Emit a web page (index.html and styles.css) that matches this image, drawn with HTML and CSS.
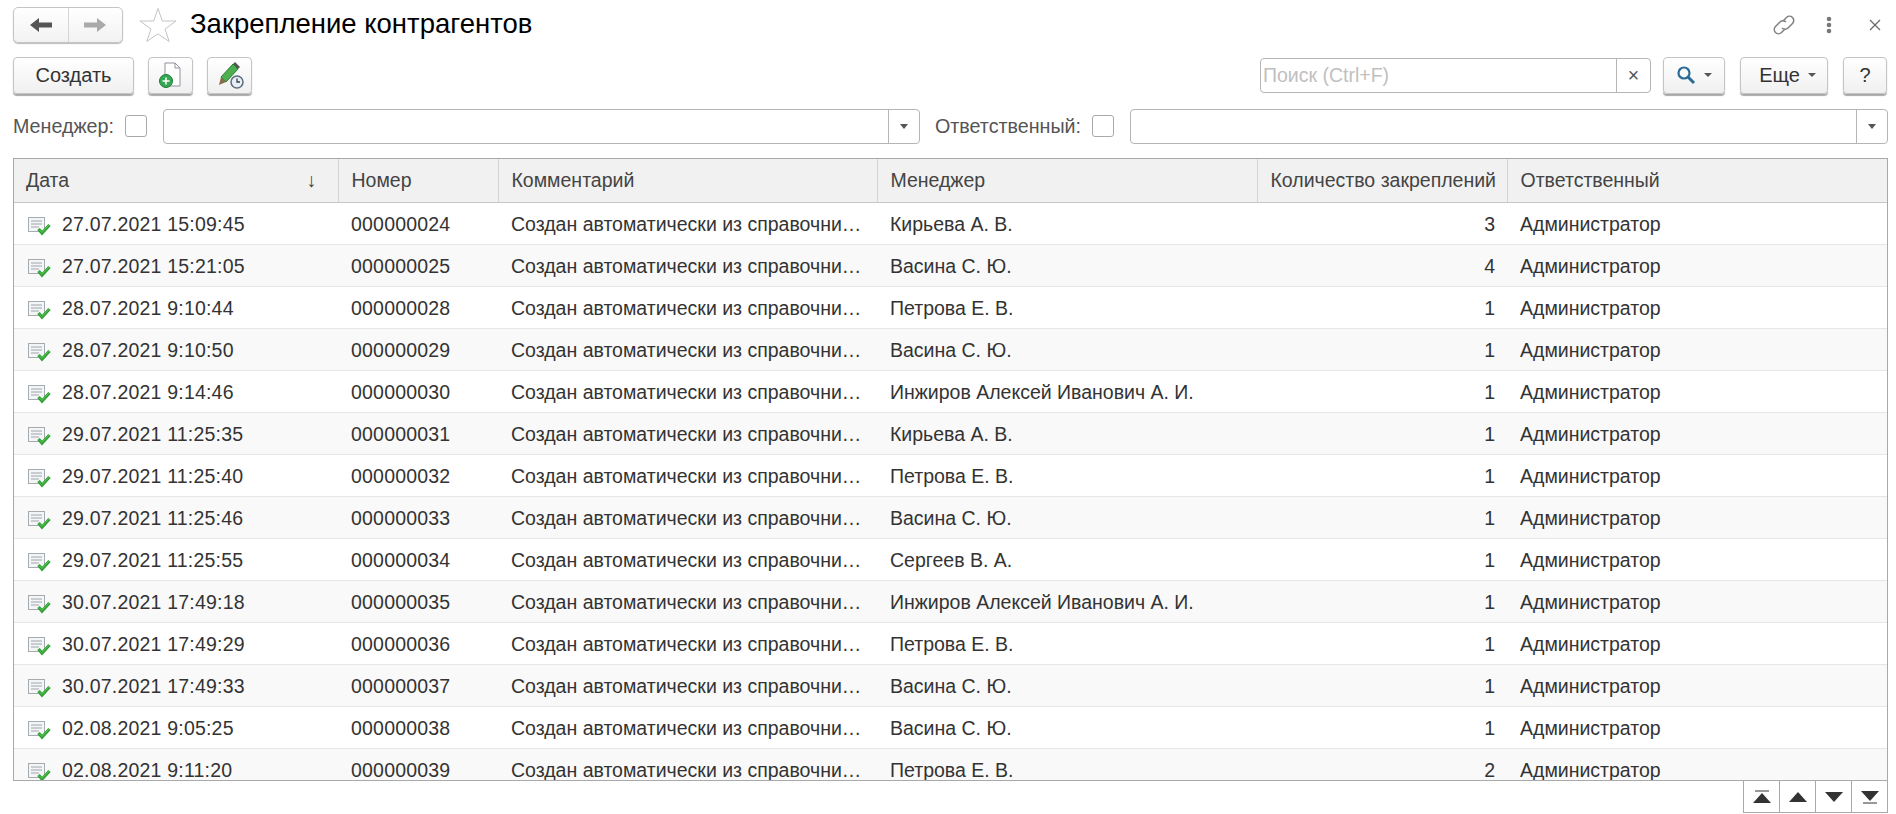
FILE: index.html
```html
<!DOCTYPE html>
<html lang="ru">
<head>
  <meta charset="UTF-8">
  <title>Закрепление контрагентов</title>
  <link rel="stylesheet" href="styles.css">
</head>
<body>
  <svg class="defs" width="0" height="0">
    <symbol id="doc" viewBox="0 0 24 20">
      <rect x="0.5" y="0.5" width="16" height="14" fill="#f3f5f7" stroke="#a6abb0"/>
      <path d="M3 4h11M3 7h11M3 10h8" stroke="#a0a6ac" fill="none"/>
      <path d="M10.500 12l3.500 4 7.500-8" fill="none" stroke="#2f9e35" stroke-width="3.200"/>
      <path d="M11 12.500l3 3 7-7.500" fill="none" stroke="#5ccb52" stroke-width="1"/>
    </symbol>
  </svg>

  <div class="titlebar">
    <div class="nav">
      <button class="nav-btn">
        <svg width="22" height="16" viewBox="0 0 22 16"><path d="M0 8l9-7v4.500h13v5H9V15z" fill="#555"/></svg>
      </button>
      <button class="nav-btn">
        <svg width="22" height="16" viewBox="0 0 22 16"><path d="M22 8l-9-7v4.500H0v5h13V15z" fill="#aaa"/></svg>
      </button>
    </div>
    <svg class="star" width="38" height="36" viewBox="0 0 38 36"><path d="M19 1.500l4.300 12.500H37l-11 8 4.200 12.500L19 26.800 7.800 34.500 12 22 1 14h13.700z" fill="#fff" stroke="#c4c4c4"/></svg>
    <h1>Закрепление контрагентов</h1>
    <div class="win-icons">
      <svg class="ic-link" width="24" height="24" viewBox="0 0 24 24" fill="none" stroke="#808080" stroke-width="1.500"><path d="M11 8l3.500-3.500a4.200 4.200 0 0 1 6 6L16 15a4.200 4.200 0 0 1-6 0"/><path d="M13 16l-3.500 3.500a4.200 4.200 0 0 1-6-6L8 9a4.200 4.200 0 0 1 6 0"/></svg>
      <svg class="ic-dots" width="6" height="18" viewBox="0 0 6 18" fill="#777"><circle cx="3" cy="3" r="2.300"/><circle cx="3" cy="9" r="2.300"/><circle cx="3" cy="15" r="2.300"/></svg>
      <svg class="ic-close" width="12" height="12" viewBox="0 0 12 12" stroke="#666" stroke-width="1.200"><path d="M1 1l10 10M11 1L1 11"/></svg>
    </div>
  </div>

  <div class="toolbar">
    <button class="btn btn-create">Создать</button>
    <button class="btn btn-icon">
      <svg width="28" height="28" viewBox="0 0 28 28">
        <path d="M8 2h10l5 5v18H8z" fill="#fff" stroke="#8d949b"/>
        <path d="M18 2v5h5" fill="none" stroke="#8d949b"/>
        <circle cx="9" cy="20" r="6.500" fill="#34a853" stroke="#1f7a36"/>
        <path d="M9 16.500v7M5.500 20h7" stroke="#fff" stroke-width="1.500"/>
      </svg>
    </button>
    <button class="btn btn-icon">
      <svg width="30" height="28" viewBox="0 0 30 28">
        <path d="M6 16L18 3l5 5-12 13z" fill="#4caf50" stroke="#2e7d32"/>
        <path d="M18 3l2-2 5 5-2 2z" fill="#555"/>
        <path d="M6 16l5 5-7 3z" fill="#8a6d4b"/>
        <circle cx="22" cy="21" r="6" fill="#e8eef5" stroke="#5d6b7a" stroke-width="1.500"/>
        <path d="M22 17.500V21h3" fill="none" stroke="#38424d" stroke-width="1.300"/>
      </svg>
    </button>
    <div class="search">
      <span class="search-text">Поиск (Ctrl+F)</span>
      <span class="search-clear">×</span>
    </div>
    <button class="btn btn-find">
      <svg width="20" height="20" viewBox="0 0 20 20" fill="none"><circle cx="8" cy="8" r="5.500" stroke="#2a6a96" stroke-width="2.200"/><path d="M12 12l6 6" stroke="#2a6a96" stroke-width="3"/></svg>
      <span class="caret"></span>
    </button>
    <button class="btn btn-more">Еще <span class="caret"></span></button>
    <button class="btn btn-help">?</button>
  </div>

  <div class="filters">
    <label class="filter-label">Менеджер:</label>
    <span class="check"></span>
    <div class="combo combo-manager"><span class="combo-arrow"><i></i></span></div>
    <label class="filter-label">Ответственный:</label>
    <span class="check"></span>
    <div class="combo combo-owner"><span class="combo-arrow"><i></i></span></div>
  </div>

  <div class="grid-wrap">
    <table class="grid">
      <colgroup>
        <col class="c-date"><col class="c-num"><col class="c-comment"><col class="c-manager"><col class="c-count"><col>
      </colgroup>
      <thead>
        <tr>
          <th><div class="th-date"><span>Дата</span><span class="sort">↓</span></div></th>
          <th>Номер</th>
          <th>Комментарий</th>
          <th>Менеджер</th>
          <th>Количество закреплений</th>
          <th>Ответственный</th>
        </tr>
      </thead>
      <tbody id="rows"></tbody>
    </table>
  </div>

  <div class="pager-row">
    <div class="pager">
      <span class="pg"><svg width="18" height="14" viewBox="0 0 18 14" fill="#333"><path d="M2 0h14v2H2z" fill="#999"/><path d="M9 3l9 10H0z"/></svg></span>
      <span class="pg"><svg width="18" height="10" viewBox="0 0 18 10" fill="#333"><path d="M9 0l9 10H0z"/></svg></span>
      <span class="pg"><svg width="18" height="10" viewBox="0 0 18 10" fill="#333"><path d="M9 10l9-10H0z"/></svg></span>
      <span class="pg"><svg width="18" height="14" viewBox="0 0 18 14" fill="#333"><path d="M9 11L18 1H0z"/><path d="M2 12h14v2H2z" fill="#999"/></svg></span>
    </div>
  </div>

  <script>
    const data = [
      ['27.07.2021 15:09:45', '000000024', 'Кирьева А. В.', 3],
      ['27.07.2021 15:21:05', '000000025', 'Васина С. Ю.', 4],
      ['28.07.2021 9:10:44', '000000028', 'Петрова Е. В.', 1],
      ['28.07.2021 9:10:50', '000000029', 'Васина С. Ю.', 1],
      ['28.07.2021 9:14:46', '000000030', 'Инжиров Алексей Иванович А. И.', 1],
      ['29.07.2021 11:25:35', '000000031', 'Кирьева А. В.', 1],
      ['29.07.2021 11:25:40', '000000032', 'Петрова Е. В.', 1],
      ['29.07.2021 11:25:46', '000000033', 'Васина С. Ю.', 1],
      ['29.07.2021 11:25:55', '000000034', 'Сергеев В. А.', 1],
      ['30.07.2021 17:49:18', '000000035', 'Инжиров Алексей Иванович А. И.', 1],
      ['30.07.2021 17:49:29', '000000036', 'Петрова Е. В.', 1],
      ['30.07.2021 17:49:33', '000000037', 'Васина С. Ю.', 1],
      ['02.08.2021 9:05:25', '000000038', 'Васина С. Ю.', 1],
      ['02.08.2021 9:11:20', '000000039', 'Петрова Е. В.', 2]
    ];

    const tbody = document.getElementById('rows');
    data.forEach(row => {
      const tr = document.createElement('tr');
      tr.innerHTML = `
        <td class="digits"><div class="cell-date"><svg class="row-icon"><use href="#doc"/></svg>${row[0]}</div></td>
        <td class="digits">${row[1]}</td>
        <td>Создан автоматически из справочни…</td>
        <td>${row[2]}</td>
        <td class="num">${row[3]}</td>
        <td>Администратор</td>`;
      tbody.appendChild(tr);
    });
  </script>
</body>
</html>
```

FILE: styles.css
```css
html, body {
  margin: 0;
  padding: 0;
  height: 100%;
  overflow: hidden;
}
body {
  font-family: "Liberation Sans", Arial, sans-serif;
  font-size: 19.5px;
  color: #333;
  background: #fff;
}
.defs {
  position: absolute;
}
button {
  font-family: inherit;
}

/* title */
.titlebar {
  display: flex;
  align-items: center;
  height: 50px;
  padding: 0 13px;
}
.nav {
  display: flex;
  width: 110px;
  height: 36px;
  border: 1px solid #c4c4c4;
  border-radius: 5px;
  box-shadow: 0 1px 1px #bbb;
  background: linear-gradient(#fff, #f2f2f2);
  box-sizing: border-box;
}
.nav-btn {
  flex: 1;
  border: none;
  background: none;
  padding: 0;
  display: flex;
  align-items: center;
  justify-content: center;
}
.nav-btn + .nav-btn {
  border-left: 1px solid #d5d5d5;
}
.star {
  margin-left: 16px;
}
h1 {
  font-size: 27.5px;
  font-weight: normal;
  color: #000;
  margin: 0 0 2px 13px;
}
.win-icons {
  margin-left: auto;
  display: flex;
  align-items: center;
  padding-right: 2px;
}
.ic-dots {
  margin-left: 30px;
}
.ic-close {
  margin-left: 37px;
}

/* toolbar */
.toolbar {
  display: flex;
  align-items: center;
  height: 38px;
  padding: 0 9px 0 13px;
  margin-top: 6px;
}
.btn {
  height: 37px;
  box-sizing: border-box;
  border: 1px solid #c4c4c4;
  border-radius: 4px;
  background: linear-gradient(#fff, #f0f0f0);
  box-shadow: 0 2px 1px #a8a8a8;
  color: #333;
  font-size: 20px;
  display: flex;
  align-items: center;
  justify-content: center;
  padding: 0;
}
.btn-create {
  width: 121px;
}
.btn-icon {
  width: 45px;
  margin-left: 14px;
}
.search {
  margin-left: auto;
  width: 391px;
  height: 35px;
  box-sizing: border-box;
  border: 1px solid #b5b5b5;
  border-radius: 4px;
  display: flex;
  align-items: center;
}
.search-text {
  flex: 1;
  padding-left: 2px;
  color: #c0c0c0;
}
.search-clear {
  width: 33px;
  height: 100%;
  border-left: 1px solid #b5b5b5;
  display: flex;
  align-items: center;
  justify-content: center;
  color: #555;
}
.btn-find {
  width: 62px;
  margin-left: 12px;
  gap: 8px;
}
.btn-more {
  width: 88px;
  margin-left: 15px;
  gap: 8px;
  padding-left: 7px;
}
.btn-help {
  width: 44px;
  margin-left: 15px;
}
.caret {
  width: 0;
  height: 0;
  border-left: 4px solid transparent;
  border-right: 4px solid transparent;
  border-top: 4px solid #555;
}

/* filters */
.filters {
  display: flex;
  align-items: center;
  height: 36px;
  padding: 0 8px 0 13px;
  margin-top: 14px;
  margin-bottom: 14px;
  color: #555;
  font-size: 19.7px;
}
.check {
  width: 22px;
  height: 22px;
  box-sizing: border-box;
  border: 1px solid #aaa;
  border-radius: 3px;
  margin-left: 11px;
  flex: none;
}
.combo {
  height: 35px;
  box-sizing: border-box;
  border: 1px solid #b5b5b5;
  border-radius: 4px;
  margin-left: 16px;
  display: flex;
  justify-content: flex-end;
}
.combo-manager {
  width: 757px;
  margin-right: 15px;
}
.combo-owner {
  flex: 1;
  margin-left: 16px;
}
.combo-arrow {
  width: 30px;
  border-left: 1px solid #b5b5b5;
  display: flex;
  align-items: center;
  justify-content: center;
}
.combo-arrow i {
  width: 0;
  height: 0;
  border-left: 4px solid transparent;
  border-right: 4px solid transparent;
  border-top: 5px solid #555;
}

/* grid */
.grid-wrap {
  height: 623px;
  margin: 0 8px 0 13px;
  box-sizing: border-box;
  border: 1px solid #a9a9a9;
  overflow: hidden;
}
.grid {
  width: 100%;
  table-layout: fixed;
  border-collapse: collapse;
}
.c-date { width: 324px; }
.c-num { width: 160px; }
.c-comment { width: 379px; }
.c-manager { width: 380px; }
.c-count { width: 250px; }
.grid th {
  height: 43px;
  padding: 1px 12px 0 13px;
  box-sizing: border-box;
  background: #f1f1f1;
  border-bottom: 1px solid #c8c8c8;
  border-right: 1px solid #d4d4d4;
  font-weight: normal;
  color: #444;
  text-align: left;
  white-space: nowrap;
  overflow: hidden;
}
.grid th:first-child {
  padding-left: 12px;
}
.grid th:last-child {
  border-right: none;
}
.th-date {
  display: flex;
  justify-content: space-between;
  padding-right: 9px;
}
.grid td {
  height: 42px;
  padding: 2px 12px 0 13px;
  box-sizing: border-box;
  border-bottom: 1px solid #e6e6e6;
  white-space: nowrap;
  overflow: hidden;
}
.grid td:first-child {
  padding-left: 12px;
}
.grid td.digits {
  letter-spacing: 0.2px;
}
.grid tbody tr:nth-child(even) {
  background: #f9f9f9;
}
.grid td.num {
  text-align: right;
}
.cell-date {
  display: flex;
  align-items: center;
  gap: 10px;
}
.row-icon {
  width: 24px;
  height: 20px;
  margin-left: 2px;
  margin-top: 6px;
  flex: none;
}

/* pager */
.pager-row {
  display: flex;
  justify-content: flex-end;
  padding-right: 8px;
}
.pager {
  display: flex;
  border: 1px solid #a9a9a9;
  border-top: none;
  height: 31px;
}
.pg {
  width: 35px;
  display: flex;
  align-items: center;
  justify-content: center;
}
.pg + .pg {
  border-left: 1px solid #a9a9a9;
}
```
